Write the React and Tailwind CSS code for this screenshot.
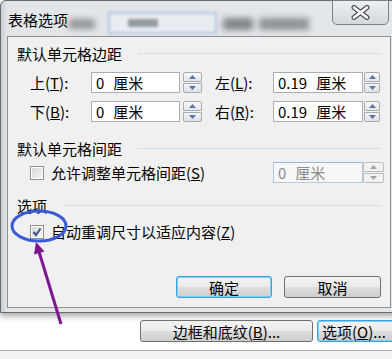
function Spinner({ disabled, w = "w-[19px]" }) {
  const tri = disabled ? "#a3a3a3" : "#5a73a8";
  return (
    <div className={`flex h-[21px] ${w} flex-col gap-px`}>
      <div
        className={`flex flex-1 items-center justify-center rounded-t-[2px] border ${
          disabled ? "border-[#bdbdbd] bg-[#f2f2f2]" : "border-[#a9adb3] bg-gradient-to-b from-[#fafafa] to-[#e2e6ea]"
        }`}
      >
        <svg width="7" height="4" viewBox="0 0 7 4">
          <path d="M0 4 L3.5 0 L7 4Z" fill={tri} />
        </svg>
      </div>
      <div
        className={`flex flex-1 items-center justify-center rounded-b-[2px] border ${
          disabled ? "border-[#bdbdbd] bg-[#f2f2f2]" : "border-[#a9adb3] bg-gradient-to-b from-[#f3f5f7] to-[#dde2e7]"
        }`}
      >
        <svg width="7" height="4" viewBox="0 0 7 4">
          <path d="M0 0 L3.5 4 L7 0Z" fill={tri} />
        </svg>
      </div>
    </div>
  );
}

function Field({ num, w }) {
  return (
    <div className={`flex h-[21px] ${w} items-center border border-[#abadb3] bg-white pl-[4px]`}>
      <span>{num}</span>
      <span className="ml-[9px]">厘米</span>
    </div>
  );
}

function Header({ text }) {
  return (
    <div className="flex items-center pl-[9px] pr-[9px]">
      <span>{text}</span>
      <div className="ml-[16px] h-px flex-1 bg-[#d5dee6]" />
    </div>
  );
}

function Checkbox({ checked }) {
  return (
    <div className="flex h-[14px] w-[14px] items-center justify-center border border-[#8e8f8f] bg-white p-px">
      <div className="flex h-full w-full items-center justify-center bg-gradient-to-br from-[#d6d6d6] to-[#f6f6f6]">
        {checked && (
          <svg width="10" height="10" viewBox="0 0 10 10">
            <path d="M1.5 5 L4 8 L8.5 1.5" fill="none" stroke="#3d5286" strokeWidth="2" />
          </svg>
        )}
      </div>
    </div>
  );
}

function Btn({ children, focused, w }) {
  return (
    <div
      className={`flex h-[22px] ${w} items-center justify-center rounded-[3px] border ${
        focused ? "border-[#3c9fe0] shadow-[inset_0_0_0_1px_#7fd0f5]" : "border-[#707070]"
      } bg-[linear-gradient(#f2f2f2_0%,#ebebeb_50%,#dddddd_51%,#cfcfcf_100%)]`}
    >
      {children}
    </div>
  );
}

export default function App() {
  return (
    <div className="relative h-[359px] w-[392px] overflow-hidden bg-white font-['Noto_Sans_CJK_SC',sans-serif] text-[15px] leading-[15px] text-black">
      <div className="flex h-[313px] w-[396px] flex-col rounded-tl-[6px] border border-[#676c71] bg-[linear-gradient(90deg,#c9ced3_0px,#e2e6e9_6px,#e4e7ea_100%)] shadow-[0_3px_6px_rgba(0,0,0,0.35)]">
        <div className="flex h-[35px] items-start">
          <span className="ml-[7px] mt-[11px] text-[15px] leading-[16px]">表格选项</span>
          <div className="ml-[1px] mt-[18px] h-[10px] w-[26px] bg-[#6d747a] opacity-70 blur-[3px]" />
          <div className="ml-[13px] mt-[11px] flex h-[22px] w-[109px] items-center border-2 border-[#aec4db] bg-[#e9edf1] pl-[18px] blur-[1.5px]">
            <div className="h-[8px] w-[30px] bg-[#7d848a] opacity-80" />
          </div>
          <div className="ml-[6px] mt-[17px] flex gap-[6px] opacity-75 blur-[3px]">
            <div className="h-[12px] w-[30px] bg-[#5f656a]" />
            <div className="h-[12px] w-[50px] bg-[#6f757a]" />
          </div>
          <div className="ml-auto mr-[6px] flex h-[25px] w-[57px] -translate-y-px items-center justify-center rounded-b-[5px] border border-[#7b8085] bg-gradient-to-b from-[#eef0f2] to-[#d3d8dd]">
            <svg width="19" height="15" viewBox="0 0 19 15">
              <path d="M3 2.5 L16 12.5 M16 2.5 L3 12.5" stroke="#4a4f55" strokeWidth="5" strokeLinecap="round" />
              <path d="M3 2.5 L16 12.5 M16 2.5 L3 12.5" stroke="#ffffff" strokeWidth="2.6" strokeLinecap="round" />
            </svg>
          </div>
        </div>

        <div className="ml-[6px] flex h-[272px] w-[384px] flex-col border border-[#8a8f94] bg-[#f0f0f0]">
          <div className="mt-[9px]">
            <Header text="默认单元格边距" />
          </div>

          <div className="mt-[11px] flex items-center pl-[22px]">
            <span className="w-[61px]">
              上(<span className="underline">T</span>):
            </span>
            <Field num="0" w="w-[89px]" />
            <div className="ml-[3px]">
              <Spinner />
            </div>
            <span className="ml-[13px] w-[58px]">
              左(<span className="underline">L</span>):
            </span>
            <Field num="0.19" w="w-[90px]" />
            <div className="ml-[1px]">
              <Spinner w="w-[16px]" />
            </div>
          </div>

          <div className="mt-[8px] flex items-center pl-[22px]">
            <span className="w-[61px]">
              下(<span className="underline">B</span>):
            </span>
            <Field num="0" w="w-[89px]" />
            <div className="ml-[3px]">
              <Spinner />
            </div>
            <span className="ml-[13px] w-[58px]">
              右(<span className="underline">R</span>):
            </span>
            <Field num="0.19" w="w-[90px]" />
            <div className="ml-[1px]">
              <Spinner w="w-[16px]" />
            </div>
          </div>

          <div className="mt-[19px]">
            <Header text="默认单元格间距" />
          </div>

          <div className="mt-[6px] flex items-center pl-[22px]">
            <div className="flex w-[243px] items-center">
              <Checkbox />
              <span className="ml-[7px]">
                允许调整单元格间距(<span className="underline">S</span>)
              </span>
            </div>
            <div className="flex h-[21px] w-[90px] items-center border border-[#b4c9e2] border-t-[#9db8da] bg-[#f7f7f7] pl-[4px] text-[#8c8c8c]">
              <span>0</span>
              <span className="ml-[9px]">厘米</span>
            </div>
            <Spinner disabled w="w-[21px]" />
          </div>

          <div className="mt-[15px]">
            <Header text="选项" />
          </div>

          <div className="mt-[8px] flex h-[21px] items-center pl-[22px]">
            <Checkbox checked />
            <span className="ml-[7px]">
              自动重调尺寸以适应内容(<span className="underline">Z</span>)
            </span>
          </div>

          <div className="mt-[34px] flex justify-end gap-[12px] pr-[9px]">
            <Btn focused w="w-[96px]">确定</Btn>
            <Btn w="w-[97px]">取消</Btn>
          </div>
        </div>
      </div>

      <div className="mt-[7px] flex">
        <div className="ml-[140px]">
          <Btn w="w-[173px]">
            边框和底纹(<span className="underline">B</span>)...
          </Btn>
        </div>
        <div className="ml-[4px]">
          <Btn focused w="w-[84px]">
            <span className="ml-[4px] w-full">
              选项(<span className="underline">O</span>)...
            </span>
          </Btn>
        </div>
      </div>
      <div className="mt-[8px] h-[20px] border-t border-[#a5a5a5] bg-[#f3f3f3]" />

      <svg className="pointer-events-none absolute inset-0" width="392" height="359" viewBox="0 0 392 359">
        <ellipse cx="39" cy="226" rx="27" ry="15" fill="none" stroke="#3a5bd8" strokeWidth="3" />
        <path d="M61 324 L38.5 250" stroke="#7d178f" strokeWidth="3" />
        <path d="M36 242 L44.5 251.5 L34 254.5Z" fill="#7d178f" />
      </svg>
    </div>
  );
}
